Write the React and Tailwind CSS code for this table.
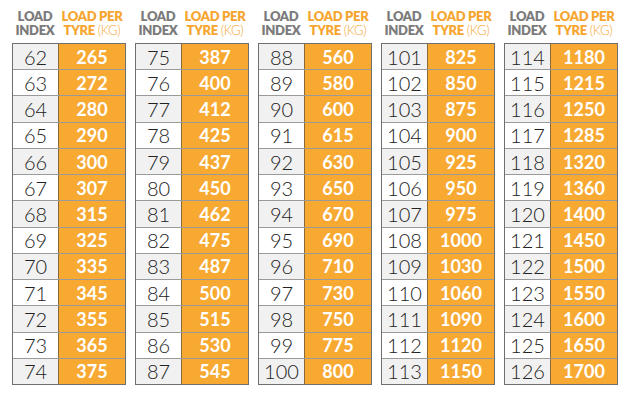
import React from "react";

const columns = [
  [[62, 265], [63, 272], [64, 280], [65, 290], [66, 300], [67, 307], [68, 315], [69, 325], [70, 335], [71, 345], [72, 355], [73, 365], [74, 375]],
  [[75, 387], [76, 400], [77, 412], [78, 425], [79, 437], [80, 450], [81, 462], [82, 475], [83, 487], [84, 500], [85, 515], [86, 530], [87, 545]],
  [[88, 560], [89, 580], [90, 600], [91, 615], [92, 630], [93, 650], [94, 670], [95, 690], [96, 710], [97, 730], [98, 750], [99, 775], [100, 800]],
  [[101, 825], [102, 850], [103, 875], [104, 900], [105, 925], [106, 950], [107, 975], [108, 1000], [109, 1030], [110, 1060], [111, 1090], [112, 1120], [113, 1150]],
  [[114, 1180], [115, 1215], [116, 1250], [117, 1285], [118, 1320], [119, 1360], [120, 1400], [121, 1450], [122, 1500], [123, 1550], [124, 1600], [125, 1650], [126, 1700]],
];

function LoadTable({ rows }) {
  return (
    <div className="w-[114px] flex flex-col">
      {/* Header */}
      <div className="flex h-[43px] pt-[9px] text-[13px] font-extrabold leading-[14px] tracking-[-0.3px]">
        <div className="w-[46px] flex flex-col items-center text-[#7b7b7b]">
          <div>LOAD</div>
          <div>INDEX</div>
        </div>
        <div className="flex-1 flex flex-col items-center text-[#f6a630]">
          <div>LOAD PER</div>
          <div>
            TYRE <span className="font-light">(KG)</span>
          </div>
        </div>
      </div>

      {/* Rows */}
      <div className="h-[342px] flex flex-col border border-[#6f6f6f]">
        {rows.map(([idx, load], i) => (
          <div
            key={idx}
            className={`flex flex-1 min-h-0 leading-none ${i < rows.length - 1 ? "border-b border-[#9a9a9a]" : ""}`}
          >
            <div
              className={`w-[45px] flex items-center justify-center text-[20px] font-light text-[#222] ${
                i % 2 === 0 ? "bg-[#f1f1f1]" : "bg-white"
              }`}
            >
              {idx}
            </div>
            <div className="flex-1 flex items-center justify-center bg-[#f8a932] border-l border-[#8a6a3a] text-[18px] font-bold text-white">
              {load}
            </div>
          </div>
        ))}
      </div>
    </div>
  );
}

export default function App() {
  return (
    <div
      className="w-[630px] h-[402px] bg-white pl-[12px] flex items-start gap-[9px]"
      style={{ fontFamily: "Lato, 'Open Sans', sans-serif" }}
    >
      {columns.map((rows, i) => (
        <LoadTable key={i} rows={rows} />
      ))}
    </div>
  );
}
